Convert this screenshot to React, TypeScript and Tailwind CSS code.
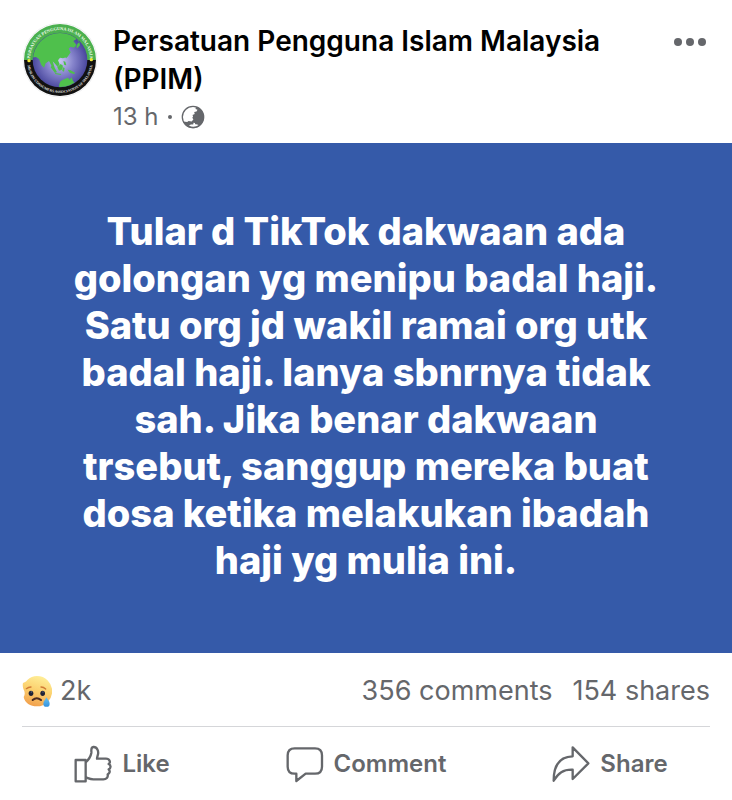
const message =
  "Tular d TikTok dakwaan ada golongan yg menipu badal haji. Satu org jd wakil ramai org utk badal haji. Ianya sbnrnya tidak sah. Jika benar dakwaan trsebut, sanggup mereka buat dosa ketika melakukan ibadah haji yg mulia ini.";

function PageLogo() {
  return (
    <svg viewBox="20 21 228 228" className="size-[76px] shrink-0" role="img" aria-label="PPIM">
      <defs>
        <radialGradient id="sea" cx="50%" cy="52%" r="55%">
          <stop offset="0" stopColor="#c9c9f2" />
          <stop offset="0.45" stopColor="#8583cb" />
          <stop offset="1" stopColor="#3d3b94" />
        </radialGradient>
        <clipPath id="globe">
          <circle cx="134" cy="135" r="81" />
        </clipPath>
        <path id="ringTop" d="M44 135a90 90 0 0 1 180 0" />
        <path id="ringBottom" d="M35 135a99 99 0 0 0 198 0" />
      </defs>
      <circle cx="134" cy="135" r="112" fill="#e9eaec" />
      <circle cx="134" cy="135" r="110" fill="#fff" />
      <path d="M26 135a108 108 0 0 1 216 0z" fill="#4bb04f" />
      <path d="M26 135a108 108 0 0 0 216 0z" fill="#111" />
      <circle cx="134" cy="135" r="82" fill="url(#sea)" />
      <g clipPath="url(#globe)" fill="#4fc04c">
        <path d="M50 128 52 90 78 58 115 50 184 54 200 72 190 80 184 72 174 78 183 90 176 98 166 95 160 101 166 112 157 125 143 130 134 128 128 136 133 148 127 156 119 146 112 139 118 158 125 172 118 170 109 154 101 138 91 145 86 158 78 150 71 132 62 126z" />
        <path d="m109 152 14 19-4 3-13-17zM126 157l10-10 7 5-4 13-8 2zM144 138l6 2 3 11-6-1zM142 157l6 2-2 11-5-2zM120 174l18 3-2 3-17-3zM157 164l9 2 14 8-5 3-12-4zM132 207l4-9 12-6 10-4 5 6 6-7 4 11 8 8-2 8-12 7-9-5-17 4-10-3zM186 87l6-6 2 10-8 9-3-4z" />
        <path d="m150 125 4-4 2 5-4 4z" />
      </g>
      <text fill="#f4fff0" fontSize="13" className="font-[Liberation_Serif,serif] font-bold">
        <textPath href="#ringTop" startOffset="50%" textAnchor="middle">
          PERSATUAN PENGGUNA ISLAM MALAYSIA
        </textPath>
      </text>
      <text fill="#e8e8e8" fontSize="11" className="font-[Liberation_Serif,serif] font-bold">
        <textPath href="#ringBottom" startOffset="50%" textAnchor="middle">
          MUSLIM CONSUMERS ASSOCIATION OF MALAYSIA
        </textPath>
      </text>
      <circle cx="41" cy="137" r="5" fill="#f5e835" />
      <circle cx="228" cy="134" r="5" fill="#f5e835" />
    </svg>
  );
}

function PublicIcon() {
  return (
    <svg viewBox="0 0 24 24" className="size-6" role="img" aria-label="Public">
      <circle cx="12" cy="12" r="10.7" fill="#fff" stroke="#65676b" strokeWidth="1.3" />
      <path
        d="M15 1.800 14.500 4l2 .8-1 1.700-2.300.6.5 1.900-2.200 1 .6 1.600-.8 1.200 1.100 1.800-1.800 1.800-3-.5-1.400 1.200-4.200-.6A10.800 10.800 0 0 0 22.800 12 10.800 10.800 0 0 0 15 1.800z"
        fill="#65676b"
      />
      <path d="M8 20.400c1.700-1.400 3-.6 4.400-1.200v-1.400l1.500.2.300 1.300c1.100-.2 2.100 0 3.300.8-2.700 1.900-6.700 2.100-9.500.3z" fill="#fff" />
    </svg>
  );
}

function SadEmoji() {
  return (
    <svg viewBox="0 0 90 96" className="h-8 w-[30px]" role="img" aria-label="Sad">
      <defs>
        <linearGradient id="face" x1="0.7" y1="0" x2="0.4" y2="1">
          <stop offset="0" stopColor="#fff09a" />
          <stop offset="0.5" stopColor="#fbd06e" />
          <stop offset="1" stopColor="#f1a04d" />
        </linearGradient>
        <linearGradient id="tear" x1="0" y1="0" x2="0" y2="1">
          <stop offset="0" stopColor="#68c1ef" />
          <stop offset="1" stopColor="#3292df" />
        </linearGradient>
      </defs>
      <path d="M45 3a45 45 0 0 1 0 91C25 94 8 84 5 66c4-7 4-13 1-20C3 39 1 32 3 24c4-2 9-3 13-9C24 7 34 3 45 3z" fill="url(#face)" />
      <g fill="none" stroke="#d07a35" strokeWidth="4" strokeLinecap="round">
        <path d="M13 41q6-5 14-5M57 36q8 0 14 6" />
      </g>
      <ellipse cx="27" cy="55" rx="7" ry="8" fill="#1e2235" />
      <ellipse cx="62" cy="55" rx="7" ry="8" fill="#1e2235" />
      <circle cx="28" cy="51" r="2" fill="#66708c" />
      <circle cx="63" cy="51" r="2" fill="#66708c" />
      <path d="M32 75q12-11 25 0" fill="none" stroke="#4a2b20" strokeWidth="6" strokeLinecap="round" />
      <path d="M73 67c5 7 10 13 10 19a9 9 0 0 1-19 0c0-6 6-12 9-19z" fill="url(#tear)" />
    </svg>
  );
}

function LikeIcon() {
  return (
    <svg viewBox="36 28 114 114" className="size-[38px]" fill="none" stroke="currentColor" strokeWidth="7" strokeLinejoin="round" aria-hidden="true">
      <path d="M41 73h30v64H41z" />
      <path d="M71 80c9-8 15-17 17-28 1-7-3-17 6-18 12-1 16 13 14 22-1 5-3 9-3 13h27c11 0 15 11 8 16 8 4 7 13 0 16 5 5 4 12-3 15 2 9-4 15-13 15H94c-10 0-14-3-23-6" />
    </svg>
  );
}

function CommentIcon() {
  return (
    <svg viewBox="40 31 114 114" className="size-[38px]" fill="none" stroke="currentColor" strokeWidth="7" strokeLinejoin="round" aria-hidden="true">
      <path d="M66 41h61c14 0 21 8 21 21v34c0 13-7 21-21 21h-28L71 139v-22h-5c-14 0-21-8-21-21V62c0-13 7-21 21-21z" />
    </svg>
  );
}

function ShareIcon() {
  return (
    <svg viewBox="33 31 114 114" className="size-[38px]" fill="none" stroke="currentColor" strokeWidth="7" strokeLinejoin="round" aria-hidden="true">
      <path d="M95 38l47 48-47 47v-28c-29-1-43 10-57 33 0-44 18-72 57-73z" />
    </svg>
  );
}

const actions = [
  { label: "Like", icon: LikeIcon },
  { label: "Comment", icon: CommentIcon },
  { label: "Share", icon: ShareIcon },
];

export default function App() {
  return (
    <article className="min-h-screen bg-white font-[Inter,sans-serif] text-[#65676b]">
      <header className="flex items-start gap-[15px] px-[22px] pt-[22px] pb-2">
        <PageLogo />
        <div className="min-w-0 flex-1">
          <h1 className="text-[28px] leading-[38px] font-semibold text-black">
            Persatuan Pengguna Islam Malaysia (PPIM)
          </h1>
          <div className="flex items-center gap-[9px] text-[24px] leading-[37px]">
            <span>13 h</span>
            <span className="size-1 rounded-full bg-[#65676b]" />
            <PublicIcon />
          </div>
        </div>
        <button type="button" aria-label="More options" className="mt-4 flex gap-1 px-1">
          <span className="size-2 rounded-full bg-[#65676b]" />
          <span className="size-2 rounded-full bg-[#65676b]" />
          <span className="size-2 rounded-full bg-[#65676b]" />
        </button>
      </header>

      <div className="bg-[#355aa9] px-16 pt-[65px] pb-[69px] text-center">
        <p className="text-[38px] leading-[47px] font-extrabold text-white">{message}</p>
      </div>

      <div className="mx-[22px] flex items-center border-b border-[#d5d6d9] pt-5 pb-[17px] text-[27px] leading-9">
        <SadEmoji />
        <span className="ml-2">2k</span>
        <a href="#comments" className="ml-auto">356 comments</a>
        <a href="#shares" className="ml-5">154 shares</a>
      </div>

      <div className="grid grid-cols-3 py-[18px]">
        {actions.map(({ label, icon: Icon }) => (
          <button key={label} type="button" className="flex items-center justify-center gap-[10px] text-[24px] leading-9 font-semibold">
            <Icon />
            {label}
          </button>
        ))}
      </div>
    </article>
  );
}
